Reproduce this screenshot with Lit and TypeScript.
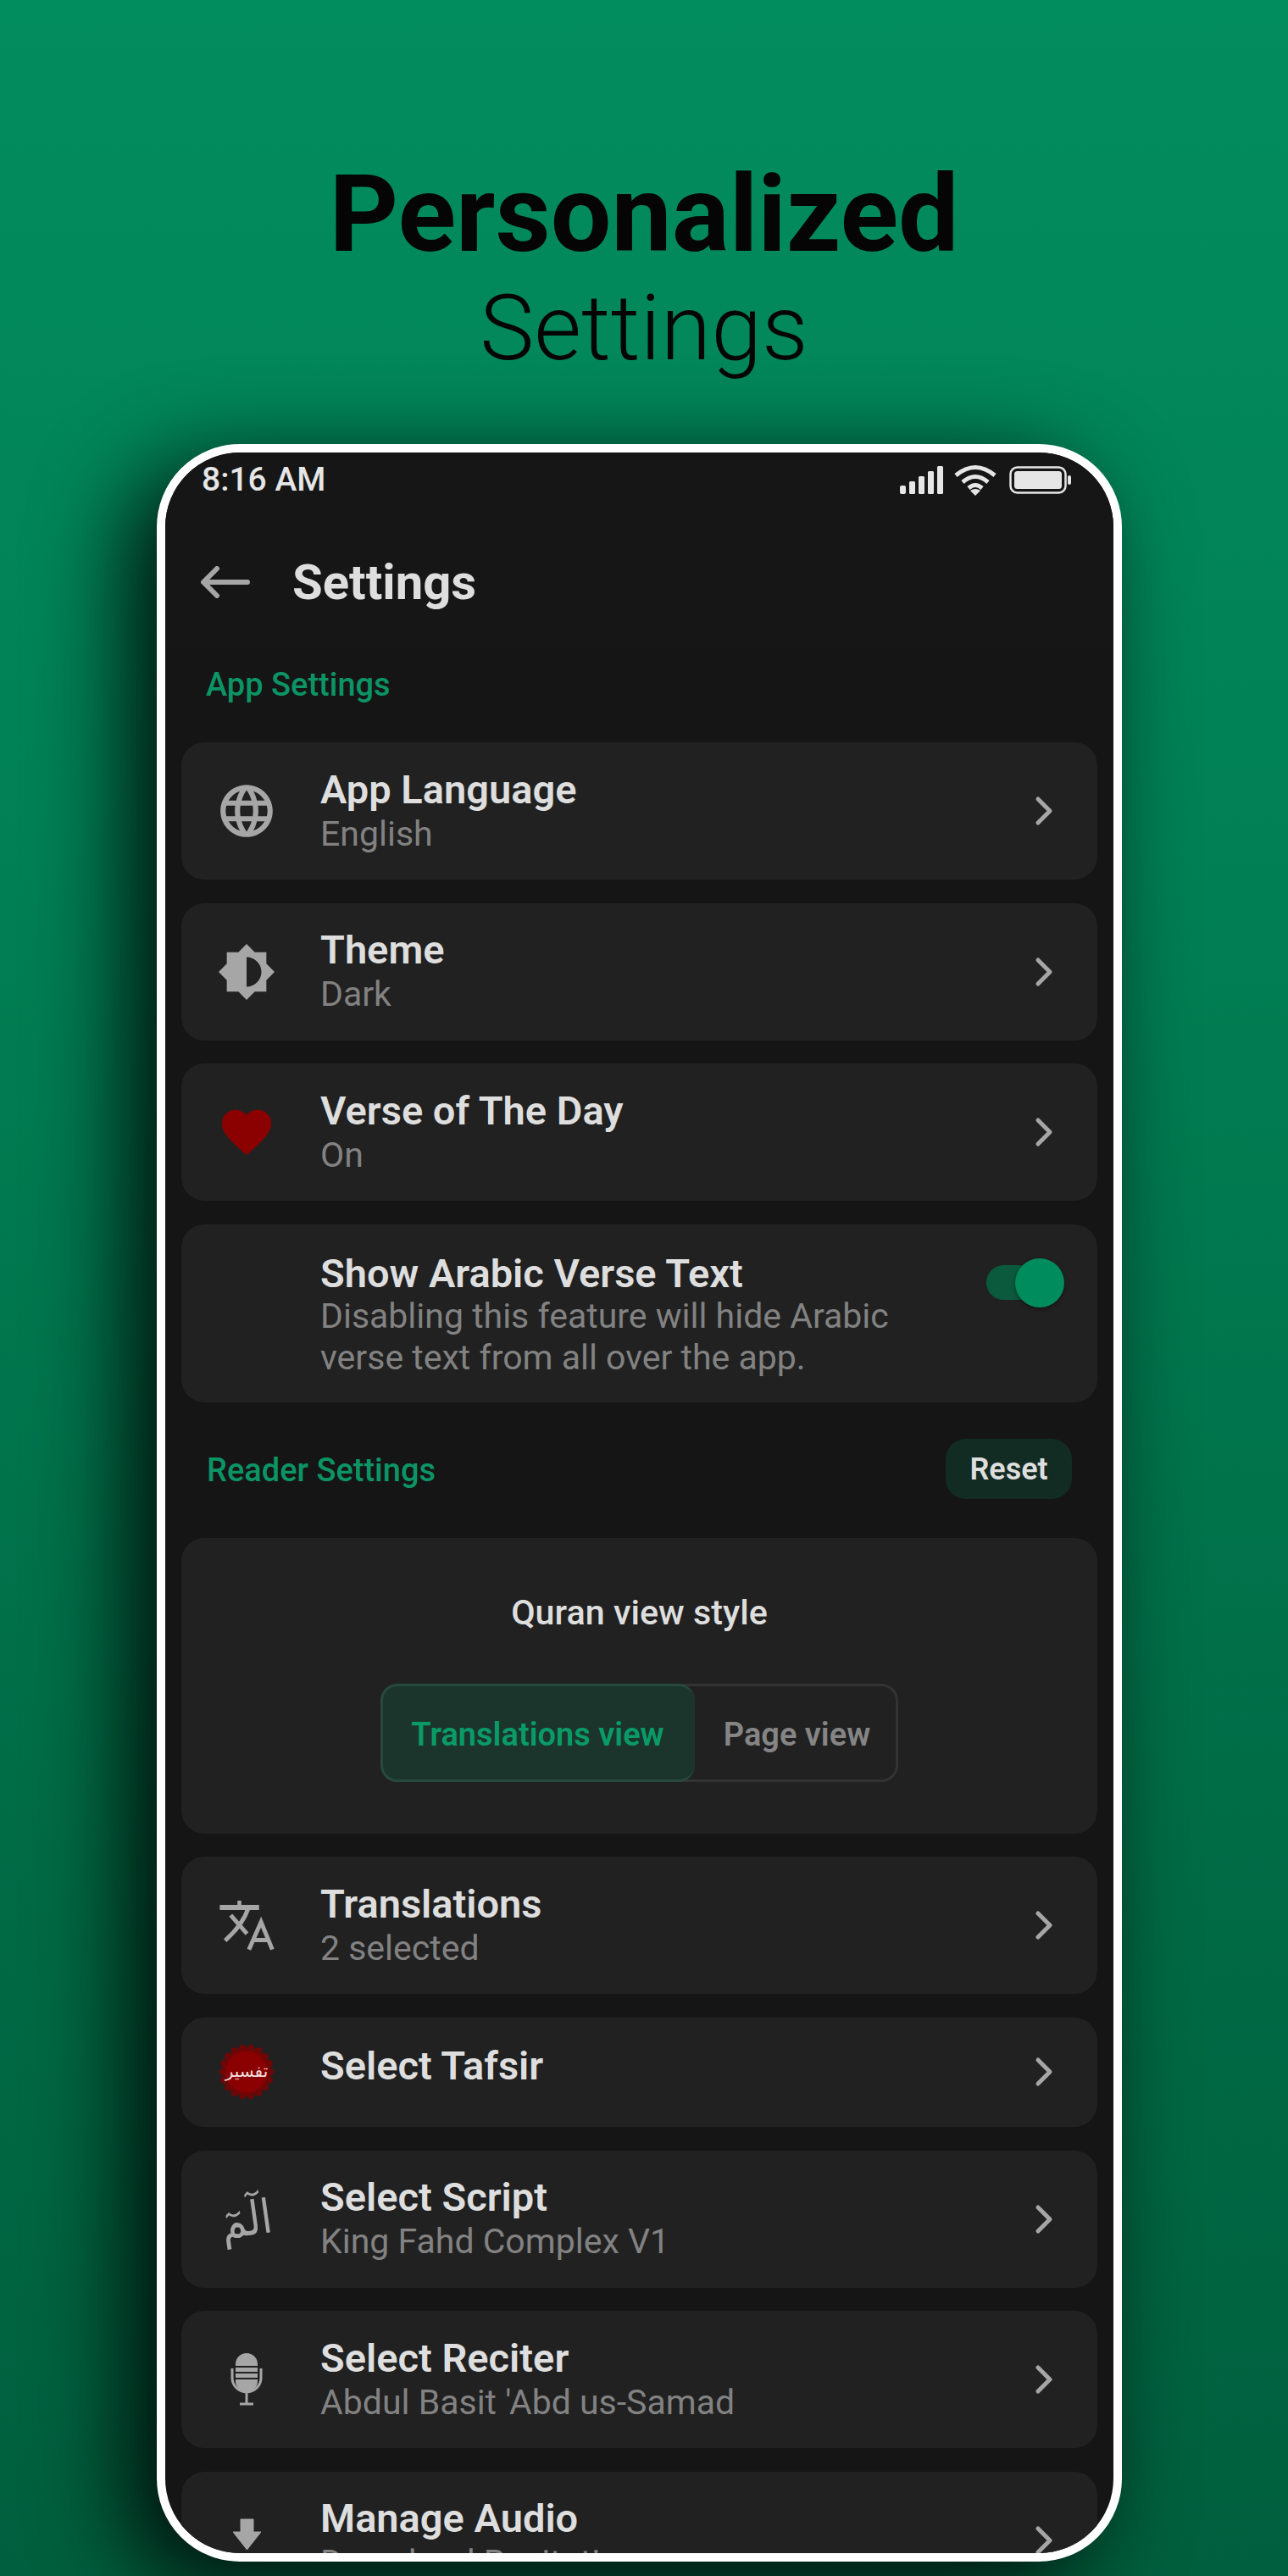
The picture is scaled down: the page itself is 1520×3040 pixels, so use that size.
import { LitElement, html, css, svg, nothing } from "lit";
import { customElement } from "lit/decorators.js";

const globe = html`<svg class="ic" width="74" height="74" viewBox="0 0 24 24"><path d="M11.99 2C6.47 2 2 6.48 2 12s4.47 10 9.99 10C17.52 22 22 17.52 22 12S17.52 2 11.99 2zm6.93 6h-2.95c-.32-1.25-.78-2.45-1.38-3.56 1.84.63 3.37 1.91 4.33 3.56zM12 4.04c.83 1.2 1.48 2.53 1.91 3.96h-3.82c.43-1.43 1.08-2.76 1.91-3.96zM4.26 14C4.1 13.36 4 12.69 4 12s.1-1.36.26-2h3.38c-.08.66-.14 1.32-.14 2 0 .68.06 1.34.14 2H4.26zm.82 2h2.95c.32 1.25.78 2.45 1.38 3.56-1.84-.63-3.37-1.9-4.33-3.56zm2.95-8H5.08c.96-1.66 2.49-2.93 4.33-3.56C8.81 5.55 8.35 6.75 8.03 8zM12 19.96c-.83-1.2-1.48-2.53-1.91-3.96h3.82c-.43 1.43-1.08 2.76-1.91 3.96zM14.34 14H9.66c-.09-.66-.16-1.32-.16-2 0-.68.07-1.35.16-2h4.68c.09.65.16 1.32.16 2 0 .68-.07 1.34-.16 2zm.25 5.56c.6-1.11 1.06-2.31 1.38-3.56h2.95c-.96 1.65-2.49 2.93-4.33 3.56zM16.36 14c.08-.66.14-1.32.14-2 0-.68-.06-1.34-.14-2h3.38c.16.64.26 1.31.26 2s-.1 1.36-.26 2h-3.38z"/></svg>`;

const brightness = html`<svg class="ic" width="70" height="70" viewBox="0 0 24 24"><path d="M20 15.31L23.31 12 20 8.69V4h-4.69L12 .69 8.69 4H4v4.69L.69 12 4 15.31V20h4.69L12 23.31 15.31 20H20v-4.69zM12 18V6c3.31 0 6 2.69 6 6s-2.69 6-6 6z"/></svg>`;

const heart = html`<svg width="70" height="70" viewBox="0 0 24 24" fill="#8b0000"><path d="M12 21.35l-1.45-1.32C5.4 15.36 2 12.28 2 8.5 2 5.42 4.42 3 7.5 3c1.74 0 3.41.81 4.5 2.09C13.09 3.81 14.76 3 16.5 3 19.58 3 22 5.42 22 8.5c0 3.78-3.4 6.86-8.55 11.54L12 21.35z"/></svg>`;

const translate = html`<svg width="67" height="63" viewBox="0 0 200 190" fill="none" stroke="#a6a6a6">
  <path d="M3 30H143" stroke-width="18" />
  <path d="M73 6V30" stroke-width="14" />
  <path d="M105 32Q85 92 22 148M42 58L100 124" stroke-width="15" />
  <path d="M107 180L150 82L190 180M122 146H176" stroke-width="15" />
</svg>`;

// scalloped edge of the tafsir seal
const scallops = Array.from({ length: 18 }, (_, i) => {
  const a = (i / 18) * Math.PI * 2;
  return svg`<circle cx=${32 + 28.5 * Math.cos(a)} cy=${32 + 28.5 * Math.sin(a)} r="4" fill="#6d0707" />`;
});
const tafsir = html`<svg width="64" height="64" viewBox="0 0 64 64">
  ${scallops}
  <circle cx="32" cy="32" r="29" fill="#6d0707" />
  <circle cx="32" cy="32" r="24.5" fill="#8b0000" />
  <text x="32" y="38" text-anchor="middle" class="seal">تفسير</text>
</svg>`;

const mic = html`<svg width="38" height="62" viewBox="0 0 38 62">
  <rect x="6" y="0" width="26" height="46" rx="13" fill="#a6a6a6" />
  <path d="M6 16H32M6 23H32M6 30H32" stroke="#212121" stroke-width="2" />
  <path d="M2 18V29A17 17 0 0 0 36 29V18M19 46V59M11 60H27" fill="none" stroke="#a6a6a6" stroke-width="3" />
</svg>`;

const download = html`<svg width="33" height="62" viewBox="0 0 33 62"><path d="M9 6H24V21H33L16.5 42L0 21H9Z" fill="#a6a6a6" stroke="#a6a6a6" stroke-width="1" stroke-linejoin="round" /><path d="M0 56H33" stroke="#a6a6a6" stroke-width="6" /></svg>`;

const script = html`<span class="alm">الٓمٓ</span>`;

interface Row {
  title: string;
  sub?: string;
  icon: unknown;
}

const topRows: Row[] = [
  { title: "App Language", sub: "English", icon: globe },
  { title: "Theme", sub: "Dark", icon: brightness },
  { title: "Verse of The Day", sub: "On", icon: heart },
];

const bottomRows: Row[] = [
  { title: "Translations", sub: "2 selected", icon: translate },
  { title: "Select Tafsir", icon: tafsir },
  { title: "Select Script", sub: "King Fahd Complex V1", icon: script },
  { title: "Select Reciter", sub: "Abdul Basit 'Abd us-Samad", icon: mic },
  { title: "Manage Audio", sub: "Download Recitations", icon: download },
];

@customElement("app-root")
export class AppRoot extends LitElement {
  static styles = css`
    :host {
      display: block;
      width: 1520px;
      height: 3040px;
      overflow: hidden;
      font-family: Roboto, "Noto Sans", sans-serif;
      background: linear-gradient(180deg, #028d5e 0%, #017f54 35%, #006a45 75%, #005f3e 100%);
    }
    .head {
      padding-top: 188px;
      text-align: center;
      color: #050505;
    }
    .head h1 {
      margin: 0;
      font-size: 127px;
      line-height: 130px;
      font-weight: 700;
    }
    .head p {
      margin: 4px 0 0;
      font-size: 108px;
      line-height: 130px;
      font-weight: 300;
    }
    .phone {
      box-sizing: border-box;
      width: 1139px;
      height: 2499px;
      margin: 72px 0 0 185px;
      border: 10px solid #fff;
      border-radius: 98px;
      background: #151515;
      overflow: hidden;
      box-shadow: -34px 26px 110px rgba(0, 0, 0, 0.88);
    }
    .status {
      height: 64px;
      padding: 0 50px 10px 43px;
      display: flex;
      align-items: center;
      justify-content: space-between;
      background: #161616;
      font-size: 39px;
      font-weight: 500;
      color: #e6e6e6;
    }
    .status-icons {
      display: flex;
      align-items: center;
      gap: 13px;
    }
    .wifi {
      margin-right: 2px;
    }
    .bar {
      height: 157px;
      display: flex;
      align-items: center;
      padding-left: 42px;
      gap: 50px;
      background: #161616;
      font-size: 58px;
      font-weight: 700;
      color: #dedede;
    }
    .label {
      font-size: 38px;
      font-weight: 500;
      color: #0c9465;
    }
    .app-label {
      height: 86px;
      padding: 0 0 25px 48px;
      display: flex;
      align-items: center;
    }
    .list {
      display: flex;
      flex-direction: column;
      gap: 27.5px;
      padding: 0 19px;
    }
    .card {
      box-sizing: border-box;
      background: #212121;
      border-radius: 27px;
      display: flex;
      align-items: center;
      min-height: 128px;
    }
    .icon {
      width: 154px;
      margin-right: 10px;
      flex: none;
      display: flex;
      align-items: center;
      justify-content: center;
      align-self: stretch;
    }
    .ic {
      fill: #a6a6a6;
    }
    .seal {
      font-family: "DejaVu Sans", sans-serif;
      font-size: 20px;
      fill: #f0dede;
    }
    .alm {
      font-family: "DejaVu Sans", sans-serif;
      font-size: 46px;
      line-height: 60px;
      color: #a6a6a6;
      display: inline-block;
      transform: rotate(-8deg) scale(1.05, 1.2);
    }
    .text {
      flex: 1;
      min-width: 0;
    }
    .row-two .text {
      padding-top: 1px;
    }
    .row-two .sub {
      margin-top: 2px;
    }
    .title {
      font-size: 47px;
      line-height: 51px;
      font-weight: 600;
      color: #dedede;
      white-space: nowrap;
    }
    .sub {
      font-size: 41px;
      line-height: 51px;
      color: #828282;
      white-space: nowrap;
    }
    .only-title {
      padding-bottom: 16px;
    }
    .chev {
      flex: none;
      margin-right: 50px;
      stroke: #a6a6a6;
    }
    .row-two {
      height: 162px;
    }
    .row-one {
      height: 129.5px;
    }
    .toggle-card {
      align-items: flex-start;
      padding-top: 32px;
      height: 210px;
    }
    .toggle-card .icon {
      align-self: auto;
    }
    .toggle-card .sub {
      line-height: 49px;
      margin-top: 1px;
    }
    .toggle {
      position: relative;
      flex: none;
      width: 92px;
      height: 41px;
      margin: 16px 39px 0 0;
    }
    .track {
      width: 58px;
      height: 41px;
      border-radius: 21px;
      background: #0b5a3e;
    }
    .knob {
      position: absolute;
      right: 0;
      top: -8px;
      width: 58px;
      height: 58px;
      border-radius: 50%;
      background: #018c5d;
      box-shadow: 0 2px 5px rgba(0, 0, 0, 0.4);
    }
    .reader {
      height: 160.5px;
      padding: 0 49px 2px 49px;
      box-sizing: border-box;
      display: flex;
      align-items: center;
      justify-content: space-between;
    }
    .reader .label {
      padding-top: 3px;
    }
    .reset {
      width: 149px;
      height: 71px;
      border-radius: 24px;
      background: #132c23;
      color: #dedede;
      font-size: 36px;
      font-weight: 600;
      display: flex;
      align-items: center;
      justify-content: center;
    }
    .view-card {
      height: 348.5px;
      flex-direction: column;
      padding-top: 65px;
    }
    .view-title {
      font-size: 41.3px;
      line-height: 46px;
      font-weight: 500;
      color: #dedede;
    }
    .segment {
      margin-top: 61px;
      box-sizing: border-box;
      width: 611px;
      height: 116px;
      display: flex;
      border: 3px solid #333;
      border-radius: 20px;
      font-size: 38px;
      font-weight: 600;
      color: #858585;
    }
    .seg {
      display: flex;
      align-items: center;
      justify-content: center;
      flex: 1;
      padding: 4px 0 0 4px;
      box-sizing: border-box;
    }
    .seg.on {
      flex: none;
      width: 371px;
      margin: -3px 0 -3px -3px;
      padding: 4px 3px 0 0;
      background: #1b352c;
      border: 3px solid #264a3d;
      border-right: 0;
      border-radius: 20px;
      color: #0a9a68;
    }
  `;

  private renderRow(r: Row) {
    return html`<div class="card ${r.sub ? "row-two" : "row-one"}">
      <div class="icon">${r.icon}</div>
      <div class="text ${r.sub ? "" : "only-title"}">
        <div class="title">${r.title}</div>
        ${r.sub ? html`<div class="sub">${r.sub}</div>` : nothing}
      </div>
      <svg class="chev" width="28" height="36" viewBox="0 0 28 36" fill="none" stroke-width="5" stroke-linecap="round" stroke-linejoin="round">
        <path d="M8 4L22 18L8 32" />
      </svg>
    </div>`;
  }

  render() {
    return html`
      <div class="head">
        <h1>Personalized</h1>
        <p>Settings</p>
      </div>
      <div class="phone">
        <div class="status">
          <span>8:16 AM</span>
          <div class="status-icons">
            <svg width="51" height="33" viewBox="0 0 51 33" fill="#e6e6e6">
              <rect x="0" y="23" width="7" height="10" rx="2" />
              <rect x="11" y="18" width="7" height="15" rx="1.5" />
              <rect x="22" y="12" width="7" height="21" rx="1.5" />
              <rect x="33" y="6" width="7" height="27" rx="1.5" />
              <rect x="44" y="0" width="7" height="33" rx="1.5" />
            </svg>
            <svg class="wifi" width="50" height="37" viewBox="0 0 50 37" fill="none" stroke="#e6e6e6" stroke-width="5">
              <path d="M2 13Q25 -6 48 13" />
              <path d="M10 21Q25 8 40 21" />
              <path d="M17 28Q25 21 33 28" />
              <path d="M25 37L19 31Q25 27 31 31Z" fill="#e6e6e6" stroke="none" />
            </svg>
            <svg width="73" height="33" viewBox="0 0 73 33">
              <rect x="1.5" y="1.5" width="65" height="30" rx="8" fill="none" stroke="#e6e6e6" stroke-width="2.5" />
              <rect x="6" y="6" width="56" height="21" rx="3.5" fill="#e6e6e6" />
              <rect x="69" y="11" width="4" height="11" rx="2" fill="#e6e6e6" />
            </svg>
          </div>
        </div>
        <div class="bar">
          <svg width="58" height="38" viewBox="0 0 58 38" fill="none" stroke="#a6a6a6" stroke-width="6" stroke-linecap="round" stroke-linejoin="round">
            <path d="M55 19H4M19 3L3 19L19 35" />
          </svg>
          <span>Settings</span>
        </div>
        <div class="label app-label">App Settings</div>
        <div class="list">
          ${topRows.map((r) => this.renderRow(r))}
          <div class="card toggle-card">
            <div class="icon"></div>
            <div class="text">
              <div class="title">Show Arabic Verse Text</div>
              <div class="sub">Disabling this feature will hide Arabic<br />verse text from all over the app.</div>
            </div>
            <div class="toggle">
              <div class="track"></div>
              <div class="knob"></div>
            </div>
          </div>
        </div>
        <div class="reader">
          <span class="label">Reader Settings</span>
          <div class="reset">Reset</div>
        </div>
        <div class="list">
          <div class="card view-card">
            <div class="view-title">Quran view style</div>
            <div class="segment">
              <div class="seg on">Translations view</div>
              <div class="seg">Page view</div>
            </div>
          </div>
          ${bottomRows.map((r) => this.renderRow(r))}
        </div>
      </div>
    `;
  }
}
